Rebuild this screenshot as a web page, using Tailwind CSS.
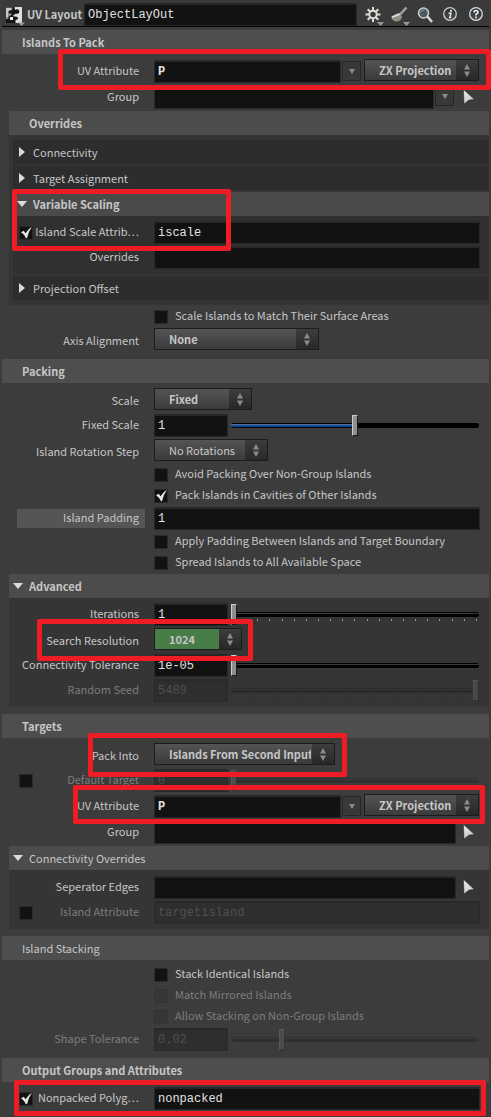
<!DOCTYPE html>
<html lang="en">
<head>
<meta charset="utf-8">
<meta name="viewport" content="width=device-width, initial-scale=1">
<title>UV Layout</title>
<script src="https://cdn.jsdelivr.net/npm/@tailwindcss/browser@4"></script>
</head>
<body class="bg-[#393939]">
<svg class="absolute size-0">
  <defs>
    <linearGradient id="metal" gradientUnits="userSpaceOnUse" x1="0" y1="0" x2="14" y2="16"><stop offset="0" stop-color="#f4f4f2"/><stop offset="1" stop-color="#b5b5af"/></linearGradient>
    <linearGradient id="disc" x1="0" y1="0" x2="0" y2="1"><stop offset="0" stop-color="#272b2e"/><stop offset="1" stop-color="#4b5358"/></linearGradient>
  </defs>
  <symbol id="updown" viewBox="0 0 6 13"><path d="M3 0 6 5.500H0zM3 13 0 7.500h6z" fill="#8b8b8b"/></symbol>
  <symbol id="down" viewBox="0 0 6 5"><path d="M0 0h6L3 5z" fill="#8b8b8b"/></symbol>
  <symbol id="open" viewBox="0 0 10 6"><path d="M0 0h10L5 6z" fill="#dcdcdc"/></symbol>
  <symbol id="closed" viewBox="0 0 6 10"><path d="M0 0 6 5 0 10z" fill="#dcdcdc"/></symbol>
  <symbol id="tick" viewBox="0 0 14 14"><path d="M2 6.200 4.800 4.700 6.500 7.200Q9 3 13 .800 9.500 5.500 8 12.200L6.800 12Q5 8 2 6.200z" fill="#e6e6e6"/></symbol>
  <symbol id="pick" viewBox="0 0 12 16"><path d="M.5.500 11.500 10.500 6 11 1 15z" fill="url(#metal)" stroke="#222" stroke-width=".5"/></symbol>
</svg>

<main class="px-[2px] pb-[5px] text-[11px] text-[#c6c6c6] bg-[#3c3c3c] font-['Noto_Sans_CJK_SC','Noto_Sans',sans-serif]
  [&_input[type=text]]:block [&_input[type=text]]:h-[23px] [&_input[type=text]]:min-w-0 [&_input[type=text]]:border [&_input[type=text]]:border-t-2 [&_input[type=text]]:border-[#282828] [&_input[type=text]]:bg-[#121212] [&_input[type=text]]:px-[3px] [&_input[type=text]]:text-[12px] [&_input[type=text]]:leading-[18px] [&_input[type=text]]:text-[#e2e2e2] [&_input[type=text]]:font-['Liberation_Mono',monospace]
  [&_input[type=text]:disabled]:border-[#292929] [&_input[type=text]:disabled]:bg-[#2e2e2e] [&_input[type=text]:disabled]:text-[#505050]
  [&_input[type=checkbox]]:block [&_input[type=checkbox]]:size-[14px] [&_input[type=checkbox]]:appearance-none [&_input[type=checkbox]]:border [&_input[type=checkbox]]:border-[#2a2a2a] [&_input[type=checkbox]]:bg-[#121212]
  [&_input[type=checkbox]:disabled]:border-[#333] [&_input[type=checkbox]:disabled]:bg-[#363636]
  [&_select]:block [&_select]:h-[22px] [&_select]:w-full [&_select]:appearance-none [&_select]:border [&_select]:border-[#1c1c1c] [&_select]:pl-[14px] [&_select]:pr-[23px] [&_select]:leading-[18px]
  [&_input[type=range]]:block [&_input[type=range]]:h-[21px] [&_input[type=range]]:w-full [&_input[type=range]]:appearance-none [&_input[type=range]]:bg-transparent
  [&_input[type=range]::-webkit-slider-thumb]:mt-[-8px] [&_input[type=range]::-webkit-slider-thumb]:h-[21px] [&_input[type=range]::-webkit-slider-thumb]:w-[6px] [&_input[type=range]::-webkit-slider-thumb]:appearance-none [&_input[type=range]::-webkit-slider-thumb]:border [&_input[type=range]::-webkit-slider-thumb]:border-[#1a1a1a] [&_input[type=range]::-webkit-slider-thumb]:border-t-[#ccc] [&_input[type=range]::-webkit-slider-thumb]:border-l-[#ccc] [&_input[type=range]::-webkit-slider-thumb]:bg-[#8f8f8f]
  [&_input[type=range]::-webkit-slider-runnable-track]:h-[5px] [&_input[type=range]::-webkit-slider-runnable-track]:rounded-xs [&_input[type=range]::-webkit-slider-runnable-track]:bg-[linear-gradient(#000_0_1px,#3a3a3a_1px_2px,#000_2px)]
  [&_input[type=range]:disabled]:opacity-20">

  <header class="flex h-[27px] border-b border-black bg-[#3a3a3a] pt-[3px]">
    <button aria-label="Node type" class="ml-[3px] shrink-0"><svg class="h-[22px] w-[20px]" viewBox="0 0 20 22">
      <rect x="1" y="3" width="16" height="16" fill="#151515"/>
      <path d="M1 3.500h6.500l-.5 3q-3.500-1-3.500 1.500 0 2 3 1.500v1.500l-2 1q-2 1-1 3H1z" fill="#8d8d8d"/>
      <path d="M1 4h5v2q-3 0-3 2.500V13H1z" fill="#c9c9c9"/>
      <path d="M9.500 3H17v16h-6.500v-3q2.500 0 2.500-1.800T10 12.500H8.500v-2q2 .5 2-1H13q2-1 1-3t-4-.5z" fill="#dedede"/>
      <path d="M12 6.500q2 0 2 1.500t-2 1.500h-1.500V7z" fill="#151515"/>
      <path d="M5 13h3v3H5z" fill="#e8e8e8"/>
      <path d="M13 18.500h7L16.500 22z" fill="#999"/></svg></button>
    <label for="node" class="ml-[2px] w-[57px] shrink-0 font-bold leading-[22px] whitespace-nowrap">UV Layout</label>
    <input id="node" type="text" value="ObjectLayOut" class="flex-1">
    <div class="ml-[6px] flex shrink-0 items-center gap-[4px]">
      <button aria-label="Settings"><svg class="h-[22px] w-[22px]" viewBox="0 0 22 22"><g stroke="#deded9" stroke-width="2" fill="none"><circle cx="10" cy="10.500" r="3.700"/><path d="M10 3v4M10 14v4M2.500 10.500h4M13.500 10.500h4M4.700 5.200l2.800 2.800M12.500 13l2.800 2.800M15.300 5.200l-2.800 2.800M7.500 13l-2.800 2.800"/></g><path d="M14 18h7l-3.500 4z" fill="#999"/></svg></button>
      <button aria-label="Brush"><svg class="h-[22px] w-[22px]" viewBox="0 0 22 22"><path d="M17.500 3.500 11 10.500" stroke="#a4a49e" stroke-width="2.500"/><path d="M2 13q4-3 7-4l4 3q0 5.500-6 5.500-3 0-5-4.500z" fill="#8d9188"/><path d="M3 13q4-1 8-3" stroke="#e0e0da" stroke-width="1.500" fill="none"/><path d="M14 18h7l-3.500 4z" fill="#999"/></svg></button>
      <button aria-label="Search"><svg class="h-[22px] w-[22px]" viewBox="0 0 22 22"><path d="m12 12 5 6" stroke="#d8d8d2" stroke-width="2.600"/><circle cx="8.500" cy="9" r="5" fill="#4b5860" stroke="#c9cdd0" stroke-width="1.600"/><path d="M5.500 8.500q1-3 4-2.500" stroke="#92a0a8" fill="none"/></svg></button>
      <button aria-label="Information"><svg class="h-[22px] w-[22px]" viewBox="0 0 22 22"><circle cx="9" cy="10" r="6.300" fill="url(#disc)" stroke="#c9cccc" stroke-width="1.300"/><circle cx="10" cy="6.800" r="1.100" fill="#eee"/><path d="M7.500 9.200H10L8.800 13.500h1.500" fill="none" stroke="#eee" stroke-width="1.400"/></svg></button>
      <button aria-label="Help"><svg class="h-[22px] w-[22px]" viewBox="0 0 22 22"><circle cx="9" cy="10" r="6.300" fill="url(#disc)" stroke="#dcdede" stroke-width="1.300"/><path d="M7 8.500Q7 6.500 9 6.500T11 8.300Q11 9.500 9 10.200V11.500" fill="none" stroke="#f4f4f4" stroke-width="1.600"/><rect x="8.200" y="12.500" width="1.700" height="1.600" fill="#f4f4f4"/></svg></button>
    </div>
  </header>

  <section class="mt-[3px]">
    <h2 class="h-[24px] bg-[#4e4e4e] pl-[20px] font-bold leading-[24px]">Islands To Pack</h2>
    <div class="relative mt-[5px] flex h-[27px] pr-[10px]">
      <label for="uv1" class="w-[152px] shrink-0 pr-[15px] text-right leading-[23px]">UV Attribute</label>
      <div class="flex flex-1 pt-px"><input id="uv1" type="text" value="P" class="flex-1 font-bold"></div>
      <button aria-label="UV attribute menu" class="mt-[2px] ml-px grid h-[20px] w-[19px] place-items-center border border-[#272727] bg-[#383838]"><svg class="h-[5px] w-[6px]"><use href="#down"/></svg></button>
      <span class="relative ml-[3px] h-[22px] w-[115px]"><select aria-label="UV projection" class="bg-linear-to-b from-[#545454] to-[#3b3b3b] font-bold"><option>ZX Projection</option></select><span class="pointer-events-none absolute inset-y-px right-px grid w-[22px] place-items-center bg-linear-to-b from-[#3d3d3d] to-[#282828]"><svg class="h-[13px] w-[6px]"><use href="#updown"/></svg></span></span>
      <div class="pointer-events-none absolute -top-[10px] -right-[2px] -bottom-[4px] left-[56px] z-10 rounded-xs border-5 border-[#ee1c24]"></div>
    </div>
    <div class="flex h-[25px]">
      <label for="g1" class="w-[152px] shrink-0 pr-[15px] text-right leading-[21px]">Group</label>
      <input id="g1" type="text" class="flex-1">
      <button aria-label="Group menu" class="ml-px grid h-[20px] w-[19px] place-items-center border border-[#272727] bg-[#383838]"><svg class="h-[5px] w-[6px]"><use href="#down"/></svg></button>
      <button aria-label="Select group" class="mr-[14px] ml-[9px] flex pt-[3px]"><svg class="h-[16px] w-[12px]"><use href="#pick"/></svg></button>
    </div>

    <div class="ml-[7px] bg-[#353535] pb-[5px]">
      <h3 class="h-[24px] bg-[#4c4c4c] pl-[20px] font-bold leading-[24px]">Overrides</h3>
      <div class="mt-[5px] ml-[4px] flex flex-col gap-[2px]">
        <button class="flex h-[24px] items-center bg-[#2d2d2d] pl-[6px] leading-[24px]"><svg class="mr-[8px] h-[10px] w-[6px]"><use href="#closed"/></svg>Connectivity</button>
        <button class="flex h-[24px] items-center bg-[#2d2d2d] pl-[6px] leading-[24px]"><svg class="mr-[8px] h-[10px] w-[6px]"><use href="#closed"/></svg>Target Assignment</button>
        <div class="relative bg-[#303030] pb-[3px]">
          <button class="flex h-[24px] w-full items-center bg-[#4a4a4a] pl-[4px] font-bold leading-[24px]"><svg class="mr-[6px] h-[6px] w-[10px]"><use href="#open"/></svg>Variable Scaling</button>
          <div class="mt-[5px] flex h-[25px] pr-[9px]">
            <div class="flex w-[141px] shrink-0 pr-[15px] pl-[6px]"><span class="relative mt-[5px] size-[14px]"><input id="isc" type="checkbox" checked><svg class="pointer-events-none absolute inset-0 size-[14px]"><use href="#tick"/></svg></span><label for="isc" class="flex-1 text-right leading-[21px] whitespace-nowrap">Island Scale Attrib…</label></div>
            <input type="text" aria-label="Island scale attribute" value="iscale" class="flex-1">
          </div>
          <div class="flex h-[25px] pr-[9px]">
            <label for="ov" class="w-[141px] shrink-0 pr-[15px] text-right leading-[21px]">Overrides</label>
            <input id="ov" type="text" class="flex-1">
          </div>
          <div class="pointer-events-none absolute -top-[3px] bottom-[23px] -left-px z-10 w-[219px] rounded-xs border-5 border-[#ee1c24]"></div>
        </div>
        <button class="flex h-[24px] items-center bg-[#2d2d2d] pl-[6px] leading-[24px]"><svg class="mr-[8px] h-[10px] w-[6px]"><use href="#closed"/></svg>Projection Offset</button>
      </div>
    </div>

    <div class="flex h-[23px] pt-[2px] pl-[152px]"><input id="c1" type="checkbox" class="mt-[3px]"><label for="c1" class="pl-[7px] leading-[17px]">Scale Islands to Match Their Surface Areas</label></div>
    <div class="flex h-[26px]">
      <label for="axis" class="w-[152px] shrink-0 pr-[15px] text-right leading-[24px]">Axis Alignment</label>
      <span class="relative h-[22px] w-[165px]"><select id="axis" class="bg-linear-to-b from-[#545454] to-[#3b3b3b] font-bold"><option>None</option></select><span class="pointer-events-none absolute inset-y-px right-px grid w-[22px] place-items-center bg-linear-to-b from-[#3d3d3d] to-[#282828]"><svg class="h-[13px] w-[6px]"><use href="#updown"/></svg></span></span>
    </div>
  </section>

  <section class="mt-[5px]">
    <h2 class="h-[24px] bg-[#4e4e4e] pl-[20px] font-bold leading-[24px]">Packing</h2>
    <div class="mt-[5px] flex h-[26px]">
      <label for="scale" class="w-[152px] shrink-0 pr-[15px] text-right leading-[24px]">Scale</label>
      <span class="relative h-[22px] w-[98px]"><select id="scale" class="bg-linear-to-b from-[#545454] to-[#3b3b3b] font-bold"><option>Fixed</option></select><span class="pointer-events-none absolute inset-y-px right-px grid w-[22px] place-items-center bg-linear-to-b from-[#3d3d3d] to-[#282828]"><svg class="h-[13px] w-[6px]"><use href="#updown"/></svg></span></span>
    </div>
    <div class="flex h-[25px] pr-[10px]">
      <label for="fs" class="w-[152px] shrink-0 pr-[15px] text-right leading-[21px]">Fixed Scale</label>
      <input id="fs" type="text" value="1" class="w-[74px]">
      <div class="ml-[3px] flex-1 pt-px"><input type="range" aria-label="Fixed scale slider" min="0" max="2" step="0.01" value="1" class="[&::-webkit-slider-runnable-track]:bg-[linear-gradient(90deg,transparent_0_50%,#000_50%),linear-gradient(#000_0_1px,#536f8c_1px_2px,#0a4a96_2px_4px,#000_4px)]!"></div>
    </div>
    <div class="flex h-[26px]">
      <label for="rot" class="w-[152px] shrink-0 pr-[15px] text-right leading-[24px]">Island Rotation Step</label>
      <span class="relative h-[22px] w-[114px]"><select id="rot" class="bg-linear-to-b from-[#545454] to-[#3b3b3b]"><option>No Rotations</option></select><span class="pointer-events-none absolute inset-y-px right-px grid w-[22px] place-items-center bg-linear-to-b from-[#3d3d3d] to-[#282828]"><svg class="h-[13px] w-[6px]"><use href="#updown"/></svg></span></span>
    </div>
    <div class="flex h-[21px] pl-[152px]"><input id="c2" type="checkbox" class="mt-[3px]"><label for="c2" class="pl-[7px] leading-[17px]">Avoid Packing Over Non-Group Islands</label></div>
    <div class="flex h-[21px] pl-[152px]"><span class="relative mt-[3px] size-[14px]"><input id="c3" type="checkbox" checked><svg class="pointer-events-none absolute inset-0 size-[14px]"><use href="#tick"/></svg></span><label for="c3" class="pl-[7px] leading-[17px]">Pack Islands in Cavities of Other Islands</label></div>
    <div class="flex h-[25px] pr-[9px] pl-[15px]">
      <label for="pad" class="mt-[2px] mr-[9px] h-[19px] w-[128px] shrink-0 bg-[#555] pr-[6px] text-right leading-[17px]">Island Padding</label>
      <input id="pad" type="text" value="1" class="flex-1">
    </div>
    <div class="flex h-[21px] pl-[152px]"><input id="c4" type="checkbox" class="mt-[3px]"><label for="c4" class="pl-[7px] leading-[17px]">Apply Padding Between Islands and Target Boundary</label></div>
    <div class="flex h-[21px] pl-[152px]"><input id="c5" type="checkbox" class="mt-[3px]"><label for="c5" class="pl-[7px] leading-[17px]">Spread Islands to All Available Space</label></div>

    <div class="ml-[7px] bg-[#353535] pb-[3px]">
      <button class="flex h-[24px] w-full items-center bg-[#4c4c4c] pl-[4px] font-bold leading-[24px]"><svg class="mr-[6px] h-[6px] w-[10px]"><use href="#open"/></svg>Advanced</button>
      <div class="mt-[5px] flex h-[25px] pr-[10px]">
        <label for="it" class="w-[145px] shrink-0 pr-[15px] text-right leading-[21px]">Iterations</label>
        <input id="it" type="text" value="1" class="w-[74px]">
        <div class="ml-[3px] flex-1 pt-px"><input type="range" aria-label="Iterations slider" min="0" max="20" value="0">
          <div class="mx-[2px] -mt-[6px] flex h-[2px] justify-between [&>i]:w-px [&>i]:bg-[#999]"><i></i><i></i><i></i><i></i><i></i><i></i><i></i><i></i><i></i><i></i><i></i><i></i><i></i><i></i><i></i><i></i><i></i><i></i><i></i><i></i><i></i></div></div>
      </div>
      <div class="relative flex h-[26px]">
        <label for="res" class="w-[145px] shrink-0 pr-[15px] text-right leading-[24px]">Search Resolution</label>
        <span class="relative h-[22px] w-[88px]"><select id="res" class="bg-[#487d48] font-bold"><option>1024</option></select><span class="pointer-events-none absolute inset-y-px right-px grid w-[22px] place-items-center bg-linear-to-b from-[#3d3d3d] to-[#282828]"><svg class="h-[13px] w-[6px]"><use href="#updown"/></svg></span></span>
        <div class="pointer-events-none absolute -top-[9px] -bottom-[7px] left-[28px] z-10 w-[216px] rounded-xs border-5 border-[#ee1c24]"></div>
      </div>
      <div class="flex h-[25px] pr-[10px]">
        <label for="tol" class="w-[145px] shrink-0 pr-[15px] text-right leading-[21px] whitespace-nowrap">Connectivity Tolerance</label>
        <input id="tol" type="text" value="1e-05" class="w-[74px]">
        <div class="ml-[3px] flex-1 pt-px"><input type="range" aria-label="Connectivity tolerance slider" min="0" max="1" step="0.01" value="0"></div>
      </div>
      <div class="flex h-[25px] pr-[10px]">
        <label for="seed" class="w-[145px] shrink-0 pr-[15px] text-right leading-[21px] text-[#7c7c7c]">Random Seed</label>
        <input id="seed" type="text" value="5489" disabled class="w-[74px]">
        <div class="ml-[3px] flex-1 pt-px"><input type="range" aria-label="Random seed slider" min="0" max="20" value="20" disabled>
          <div class="mx-[2px] -mt-[6px] flex h-[2px] justify-between [&>i]:w-px [&>i]:bg-[#4b4b4b]"><i></i><i></i><i></i><i></i><i></i><i></i><i></i><i></i><i></i><i></i><i></i><i></i><i></i><i></i><i></i><i></i><i></i><i></i><i></i><i></i><i></i></div></div>
      </div>
    </div>
  </section>

  <section class="mt-[7px]">
    <h2 class="h-[24px] bg-[#4e4e4e] pl-[20px] font-bold leading-[24px]">Targets</h2>
    <div class="relative mt-[5px] flex h-[26px]">
      <label for="into" class="w-[152px] shrink-0 pr-[15px] text-right leading-[24px]">Pack Into</label>
      <span class="relative h-[22px] w-[181px]"><select id="into" class="bg-linear-to-b from-[#545454] to-[#3b3b3b] font-bold"><option>Islands From Second Input</option></select><span class="pointer-events-none absolute inset-y-px right-px grid w-[22px] place-items-center bg-linear-to-b from-[#3d3d3d] to-[#282828]"><svg class="h-[13px] w-[6px]"><use href="#updown"/></svg></span></span>
      <div class="pointer-events-none absolute -top-[10px] -bottom-[8px] left-[86px] z-10 w-[259px] rounded-xs border-5 border-[#ee1c24]"></div>
    </div>
    <div class="flex h-[25px] pr-[10px]">
      <div class="flex w-[152px] shrink-0 pr-[15px] pl-[17px]"><input id="dt" type="checkbox" class="mt-[5px]"><label for="dt" class="flex-1 text-right leading-[21px] text-[#7c7c7c]">Default Target</label></div>
      <input type="text" aria-label="Default target" value="0" disabled class="w-[74px]">
      <div class="ml-[3px] flex-1 pt-px"><input type="range" aria-label="Default target slider" min="0" max="10" value="0" disabled></div>
    </div>
    <div class="relative flex h-[27px] pr-[10px]">
      <label for="uv2" class="w-[152px] shrink-0 pr-[15px] text-right leading-[23px]">UV Attribute</label>
      <div class="flex flex-1 pt-px"><input id="uv2" type="text" value="P" class="flex-1 font-bold"></div>
      <button aria-label="UV attribute menu" class="mt-[2px] ml-px grid h-[20px] w-[19px] place-items-center border border-[#272727] bg-[#383838]"><svg class="h-[5px] w-[6px]"><use href="#down"/></svg></button>
      <span class="relative ml-[3px] h-[22px] w-[115px]"><select aria-label="Target UV projection" class="bg-linear-to-b from-[#545454] to-[#3b3b3b] font-bold"><option>ZX Projection</option></select><span class="pointer-events-none absolute inset-y-px right-px grid w-[22px] place-items-center bg-linear-to-b from-[#3d3d3d] to-[#282828]"><svg class="h-[13px] w-[6px]"><use href="#updown"/></svg></span></span>
      <div class="pointer-events-none absolute -top-[9px] right-[4px] -bottom-[3px] left-[71px] z-10 rounded-xs border-5 border-[#ee1c24]"></div>
    </div>
    <div class="flex h-[25px]">
      <label for="g2" class="w-[152px] shrink-0 pr-[15px] text-right leading-[21px]">Group</label>
      <input id="g2" type="text" class="flex-1">
      <button aria-label="Select target group" class="mr-[14px] ml-[7px] flex pt-[3px]"><svg class="h-[16px] w-[12px]"><use href="#pick"/></svg></button>
    </div>
    <div class="ml-[7px] bg-[#353535] pb-[3px]">
      <button class="flex h-[24px] w-full items-center bg-[#4c4c4c] pl-[4px] leading-[24px]"><svg class="mr-[6px] h-[6px] w-[10px]"><use href="#open"/></svg>Connectivity Overrides</button>
      <div class="mt-[6px] flex h-[25px]">
        <label for="sep" class="w-[145px] shrink-0 pr-[15px] text-right leading-[21px]">Seperator Edges</label>
        <input id="sep" type="text" class="flex-1">
        <button aria-label="Select edges" class="mr-[14px] ml-[7px] flex pt-[3px]"><svg class="h-[16px] w-[12px]"><use href="#pick"/></svg></button>
      </div>
      <div class="flex h-[25px] pr-[9px]">
        <div class="flex w-[145px] shrink-0 pr-[15px] pl-[10px]"><input id="ia" type="checkbox" class="mt-[5px]"><label for="ia" class="flex-1 text-right leading-[21px] text-[#7c7c7c]">Island Attribute</label></div>
        <input type="text" aria-label="Island attribute" value="targetisland" disabled class="flex-1">
      </div>
    </div>
  </section>

  <section class="mt-[7px]">
    <h2 class="mb-[5px] h-[24px] bg-[#4e4e4e] pl-[20px] leading-[24px]">Island Stacking</h2>
    <div class="flex h-[21px] pl-[152px]"><input id="c6" type="checkbox" class="mt-[3px]"><label for="c6" class="pl-[7px] leading-[17px]">Stack Identical Islands</label></div>
    <div class="flex h-[21px] pl-[152px]"><input id="c7" type="checkbox" disabled class="mt-[3px]"><label for="c7" class="pl-[7px] leading-[17px] text-[#7c7c7c]">Match Mirrored Islands</label></div>
    <div class="flex h-[21px] pl-[152px]"><input id="c8" type="checkbox" disabled class="mt-[3px]"><label for="c8" class="pl-[7px] leading-[17px] text-[#7c7c7c]">Allow Stacking on Non-Group Islands</label></div>
    <div class="flex h-[25px] pr-[10px]">
      <label for="st" class="w-[152px] shrink-0 pr-[15px] text-right leading-[21px] text-[#7c7c7c]">Shape Tolerance</label>
      <input id="st" type="text" value="0.02" disabled class="w-[74px]">
      <div class="ml-[3px] flex-1 pt-px"><input type="range" aria-label="Shape tolerance slider" min="0" max="0.1" step="0.001" value="0.02" disabled></div>
    </div>
  </section>

  <section class="mt-[5px]">
    <h2 class="h-[24px] bg-[#4e4e4e] pl-[20px] font-bold leading-[24px]">Output Groups and Attributes</h2>
    <div class="relative mt-[5px] flex h-[25px] pr-[9px]">
      <div class="flex w-[152px] shrink-0 pr-[15px] pl-[17px]"><span class="relative mt-[5px] size-[14px]"><input id="np" type="checkbox" checked><svg class="pointer-events-none absolute inset-0 size-[14px]"><use href="#tick"/></svg></span><label for="np" class="flex-1 text-right leading-[21px] whitespace-nowrap">Nonpacked Polyg…</label></div>
      <input type="text" aria-label="Nonpacked polygons group" value="nonpacked" class="flex-1">
      <div class="pointer-events-none absolute -top-[7px] right-[3px] -bottom-[4px] left-[12px] z-10 rounded-xs border-5 border-[#ee1c24]"></div>
    </div>
  </section>
</main>
</body>
</html>
